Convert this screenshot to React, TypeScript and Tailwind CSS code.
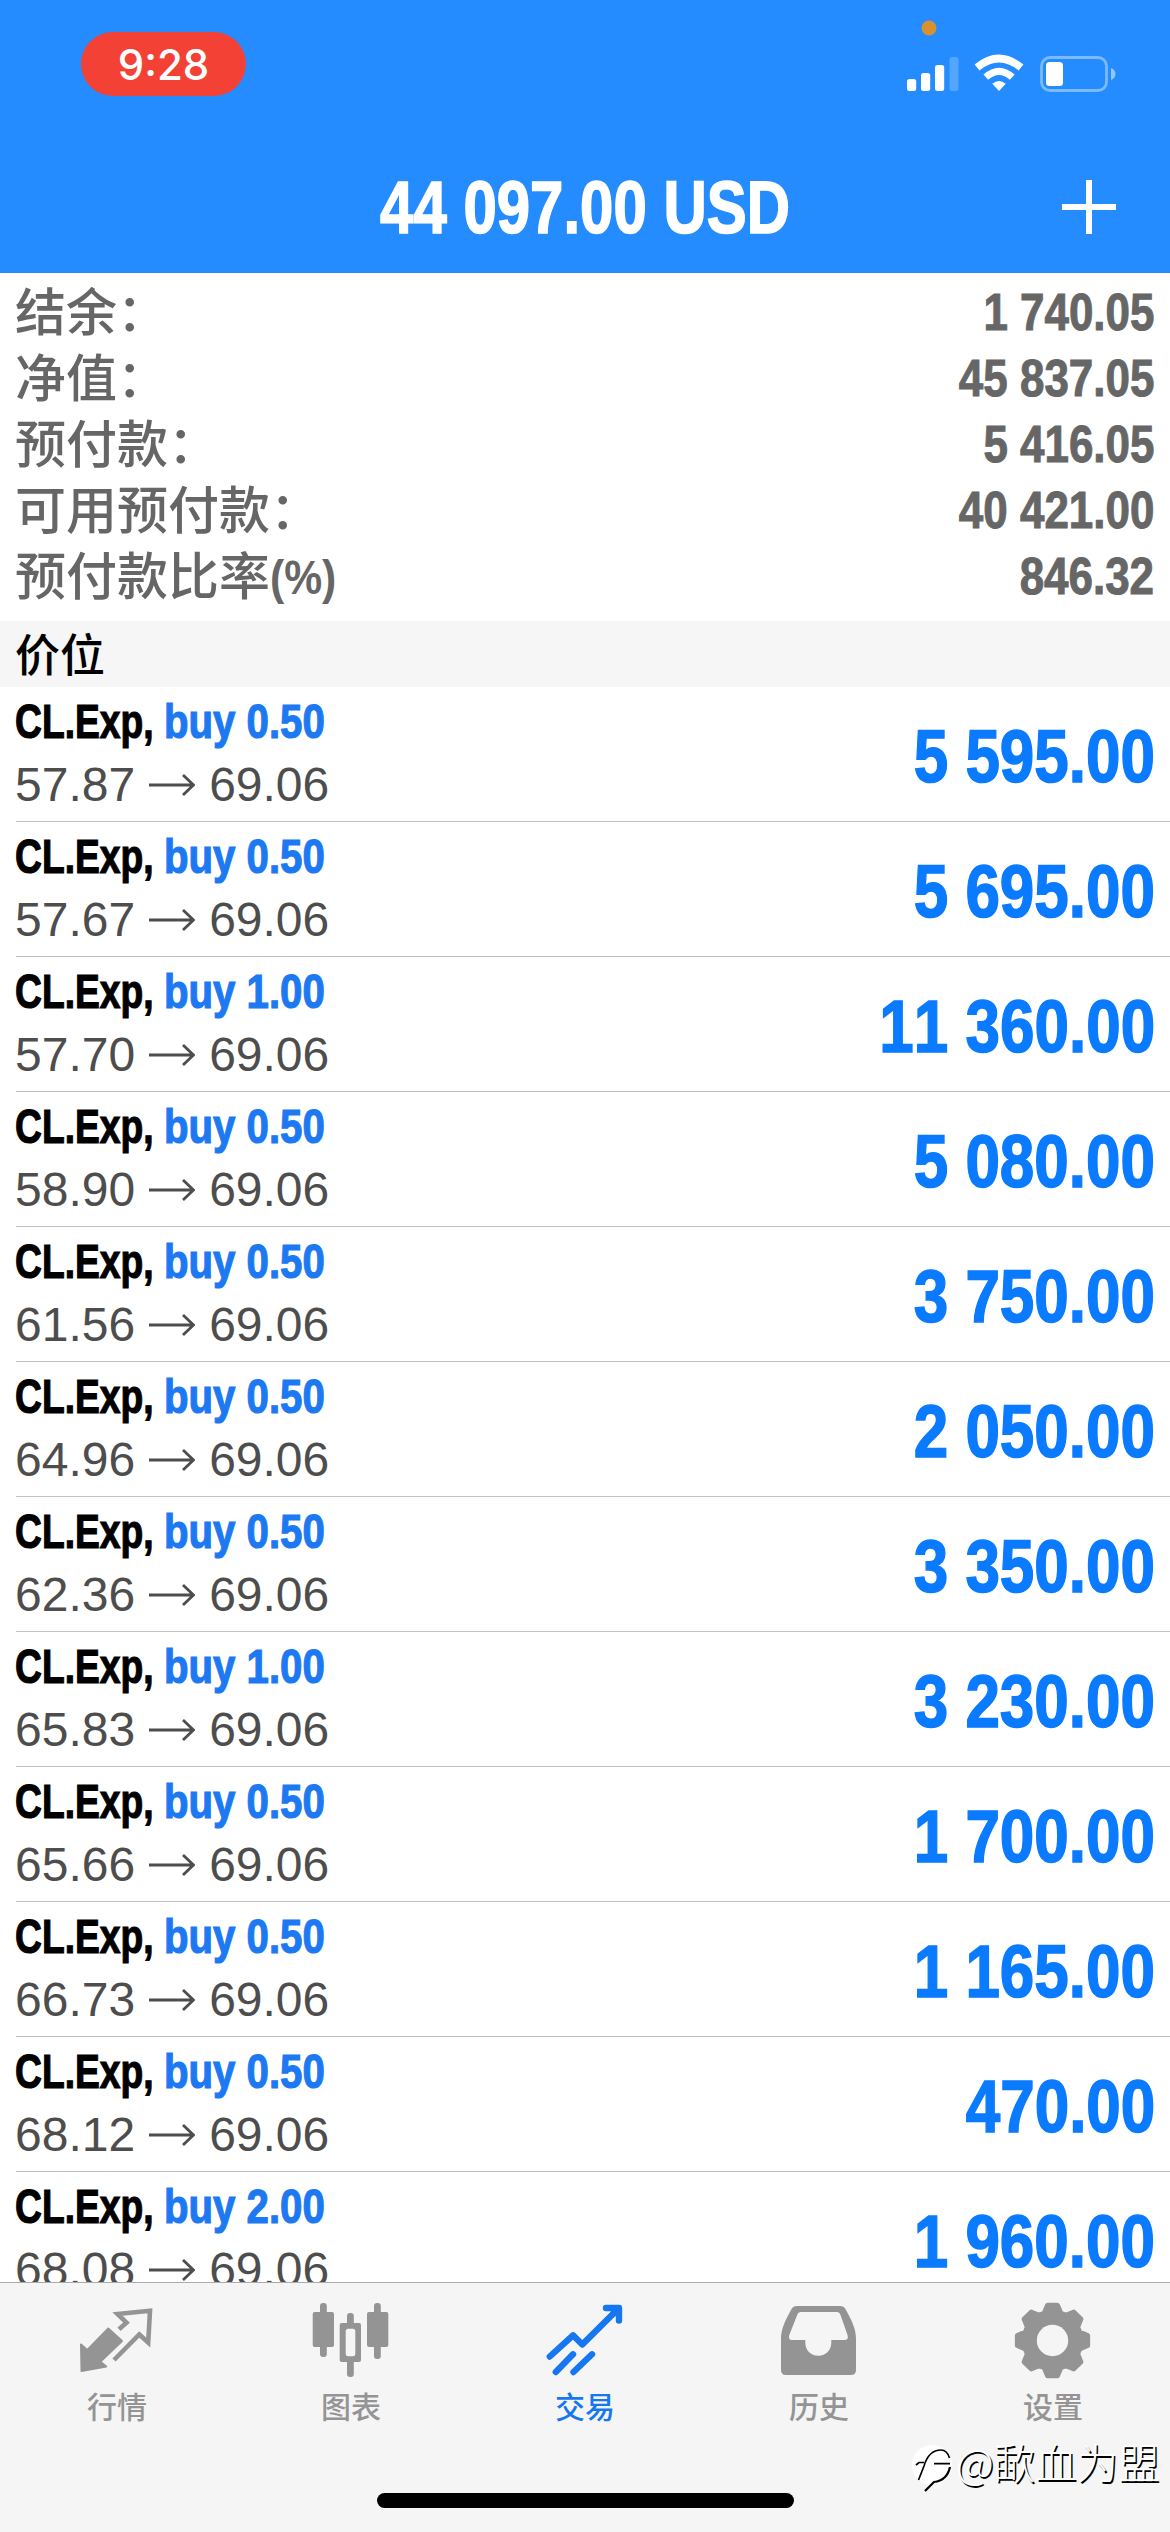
import type { ReactNode } from 'react';

type TabType = 'quotes' | 'charts' | 'trade' | 'history' | 'settings';

const summary = [
  { label: '结余：', value: '1 740.05' },
  { label: '净值：', value: '45 837.05' },
  { label: '预付款：', value: '5 416.05' },
  { label: '可用预付款：', value: '40 421.00' },
  { label: '预付款比率', suffix: '(%)', value: '846.32' },
];

const positions = [
  { volume: '0.50', open: '57.87', profit: '5 595.00' },
  { volume: '0.50', open: '57.67', profit: '5 695.00' },
  { volume: '1.00', open: '57.70', profit: '11 360.00' },
  { volume: '0.50', open: '58.90', profit: '5 080.00' },
  { volume: '0.50', open: '61.56', profit: '3 750.00' },
  { volume: '0.50', open: '64.96', profit: '2 050.00' },
  { volume: '0.50', open: '62.36', profit: '3 350.00' },
  { volume: '1.00', open: '65.83', profit: '3 230.00' },
  { volume: '0.50', open: '65.66', profit: '1 700.00' },
  { volume: '0.50', open: '66.73', profit: '1 165.00' },
  { volume: '0.50', open: '68.12', profit: '470.00' },
  { volume: '2.00', open: '68.08', profit: '1 960.00' },
];

function gearPath() {
  const c = 39.5;
  const points: string[] = [];
  for (let i = 0; i < 8; i++) {
    const base = i * 45;
    for (const [offset, r] of [[-17, 28.5], [-8, 35.5], [8, 35.5], [17, 28.5]]) {
      const a = ((base + offset) * Math.PI) / 180;
      points.push(`${(c + r * Math.sin(a)).toFixed(2)} ${(c - r * Math.cos(a)).toFixed(2)}`);
    }
  }
  return `M${points.join('L')}Z`;
}

function QuotesIcon() {
  return (
    <svg viewBox="0 0 80 80" className="size-20" strokeLinejoin="round">
      <path d="M4 43.5L10.3 49L31.3 27.5L45 40L23.3 60.7L29.3 65.5L4.5 70Z" fill="currentColor" stroke="currentColor" strokeWidth="2" />
      <path d="M42 28.2L49.5 21.7L40.5 13L73 9.8L71.2 41.5L62.3 33.5L37 59" fill="none" stroke="currentColor" strokeWidth="4.6" strokeLinejoin="miter" />
    </svg>
  );
}

function ChartsIcon() {
  return (
    <svg viewBox="0 0 80 80" className="size-20" fill="currentColor">
      <rect x="9" y="2" width="6.8" height="54" rx="3" />
      <rect x="1.7" y="11" width="21.3" height="35" rx="2" />
      <rect x="36" y="12" width="6.8" height="64" rx="3" />
      <rect x="28.7" y="22" width="21.3" height="39" rx="2" />
      <rect x="34.7" y="27.7" width="9.6" height="27.6" rx="2.5" fill="#f5f5f5" />
      <rect x="63" y="2" width="6.8" height="56" rx="3" />
      <rect x="56" y="11" width="21.3" height="35" rx="2" />
    </svg>
  );
}

function TradeIcon() {
  return (
    <svg viewBox="0 0 80 80" className="size-20" fill="none" stroke="currentColor" strokeWidth="6.4" strokeLinecap="round" strokeLinejoin="round">
      <path d="M4.8 55.5L28 34.3L37.3 43.5L73 8" />
      <path d="M61 7H74V19.5" />
      <path d="M67 8L73 14" strokeWidth="5" />
      <path d="M10.8 71L28 53.3M28.5 71L47 53.3" />
    </svg>
  );
}

function HistoryIcon() {
  return (
    <svg viewBox="0 0 80 80" className="size-20" fill="currentColor" fillRule="evenodd">
      <path d="M18 5H61C64 5 65.5 6 67 9C73 20 77 28 77 38V69Q77 74 72 74H7Q2 74 2 69V38C2 28 6 20 12 9C13.500 6 15 5 18 5ZM22 11C20 11 19 12 18.200 14L10.300 34Q9 39 13 39H26.300V41.500C26.300 49 31.500 54.700 39.300 54.700C47 54.700 52.300 49 52.300 41.500V39H65.500Q70 39 68.500 34L61.500 14C60.800 12 59.500 11 58 11Z" />
    </svg>
  );
}

function SettingsIcon() {
  return (
    <svg viewBox="0 0 80 80" className="size-20">
      <path d={gearPath()} fill="currentColor" stroke="currentColor" strokeWidth="5" strokeLinejoin="round" />
      <circle cx="39.500" cy="39.500" r="15.700" fill="#f5f5f5" />
    </svg>
  );
}

const tabs: { id: TabType; label: string; icon: () => ReactNode }[] = [
  { id: 'quotes', label: '行情', icon: QuotesIcon },
  { id: 'charts', label: '图表', icon: ChartsIcon },
  { id: 'trade', label: '交易', icon: TradeIcon },
  { id: 'history', label: '历史', icon: HistoryIcon },
  { id: 'settings', label: '设置', icon: SettingsIcon },
];

function StatusIcons() {
  return (
    <svg viewBox="0 0 220 80" className="h-[80px] w-[220px]" fill="#fff">
      <circle cx="29" cy="8" r="7.500" fill="#d8912f" />
      <rect x="7" y="59" width="9.200" height="12" rx="2.500" />
      <rect x="21" y="53" width="9.200" height="18" rx="2.500" />
      <rect x="35" y="45" width="9.200" height="26" rx="2.500" />
      <rect x="49.500" y="37" width="9" height="34" rx="2.500" opacity=".22" />
      <path d="M99 71L92.300 63.800Q99 58 105.700 63.800Z" />
      <path d="M85.800 57.200Q99 45.500 112.200 57.200" fill="none" stroke="#fff" strokeWidth="7" />
      <path d="M77 47.500Q99 29.500 121 47.500" fill="none" stroke="#fff" strokeWidth="7.600" />
      <rect x="141.500" y="37.500" width="65" height="33" rx="8.500" fill="none" stroke="#fff" strokeWidth="2.800" opacity=".4" />
      <rect x="146" y="42" width="17" height="24" rx="3.500" />
      <path d="M211 48C217 50 217 58 211 60Z" opacity=".5" />
    </svg>
  );
}

function Watermark() {
  return (
    <div className="absolute top-[2432px] left-[910px] flex h-[60px] items-center">
      <svg viewBox="0 0 46 60" className="h-[60px] w-[46px] shrink-0" fill="none" stroke="#000" strokeWidth="1.700">
        <circle cx="22" cy="33" r="20" fill="#fff" stroke="none" />
        <path d="M8.500 48L14 34C17 24 22 18 31 18C36 18 38 21 39.500 26" />
        <path d="M6 33L9 30.500H14M24 31.700H40" />
        <path d="M40 35C38 44 33 49 24 50L15 59" strokeWidth="2.200" />
      </svg>
      <span className="text-[41.500px] leading-none font-light whitespace-nowrap text-white [font-family:'Noto_Sans_CJK_SC',sans-serif] [text-shadow:1.500px_1.500px_0_#000]">
        @歃血为盟
      </span>
    </div>
  );
}

function App() {
  const activeTab: TabType = 'trade';

  return (
    <div className="relative flex h-[2532px] w-[1170px] flex-col overflow-hidden bg-white [font-family:'Liberation_Sans','Noto_Sans_CJK_SC',sans-serif] [font-kerning:none]">
      {/* Header */}
      <header className="flex h-[273px] shrink-0 flex-col bg-[#248cff] text-white">
        <div className="flex h-[140px] items-start justify-between pl-[81px]">
          <div className="mt-8 flex h-16 w-[165px] items-center justify-center rounded-full bg-[#f34235] text-[42px] font-medium [font-family:Inter,sans-serif]">
            9:28
          </div>
          <div className="mt-5 mr-[50px]">
            <StatusIcons />
          </div>
        </div>
        <div className="grid h-[133px] grid-cols-[1fr_auto_1fr] items-center">
          <div />
          <h1 className="mt-[3px] scale-x-[0.810] text-[74px] leading-none font-bold whitespace-nowrap [-webkit-text-stroke:1.600px_currentColor]">44 097.00 USD</h1>
          <svg viewBox="0 0 54 54" className="mr-[54px] size-[54px] justify-self-end" stroke="#fff" strokeWidth="6">
            <path d="M27 0V54M0 27H54" />
          </svg>
        </div>
      </header>

      {/* Account summary */}
      <section className="h-[348px] shrink-0 px-4 pt-1.5 text-[#666]">
        {summary.map((row) => (
          <div key={row.label} className="flex h-[66px] items-center justify-between">
            <div className="-mt-1.5 -ml-px flex text-[51px] leading-[66px] font-medium [font-family:'Noto_Sans_CJK_SC',sans-serif]">
              {row.label}
              {row.suffix && (
                <span className="origin-left translate-y-1 scale-x-[0.870] text-[49px] font-bold [font-family:'Liberation_Sans',sans-serif]">
                  {row.suffix}
                </span>
              )}
            </div>
            <div className="origin-right scale-x-[0.845] text-[52px] leading-[66px] font-bold [-webkit-text-stroke:1px_currentColor]">{row.value}</div>
          </div>
        ))}
      </section>

      <h2 className="flex h-[66px] shrink-0 items-center bg-[#f6f6f6] px-[15px] pb-1 text-[45px] leading-none font-medium text-black [font-family:'Noto_Sans_CJK_SC',sans-serif]">
        价位
      </h2>

      {/* Positions */}
      <main className="min-h-0 flex-1 overflow-hidden pl-4">
        {positions.map((item) => (
          <div key={item.open} className="flex h-[135px] justify-between border-b border-[#c2c2c4] pr-[15px]">
            <div className="-ml-px">
              <div className="flex h-[68px] text-[49px] leading-[68px] font-bold whitespace-nowrap [-webkit-text-stroke:1.200px_currentColor]">
                <span className="w-[149px] origin-left scale-x-[0.760] text-black">CL.Exp,</span>
                <span className="origin-left scale-x-[0.820] text-[#1c79f2]">buy {item.volume}</span>
              </div>
              <div className="flex h-[60px] items-center text-[48px] leading-[60px] text-[#4d4d4d]">
                {item.open}
                <svg viewBox="0 0 46 24" className="mr-[14px] ml-[14px] h-6 w-[46px]" fill="none" stroke="currentColor" strokeWidth="2.800">
                  <path d="M0 12H44M34 2L44.500 12L34 22" />
                </svg>
                69.06
              </div>
            </div>
            <div className="origin-right scale-x-[0.838] text-[74px] leading-[139px] font-bold text-[#0a7aff] [-webkit-text-stroke:1.500px_currentColor]">{item.profit}</div>
          </div>
        ))}
      </main>

      {/* Bottom navigation */}
      <nav className="flex h-[250px] shrink-0 flex-col items-center border-t border-[#acacac] bg-[#f5f5f5]">
        <div className="grid w-full grid-cols-5">
          {tabs.map((tab) => {
            const Icon = tab.icon;
            return (
              <button
                key={tab.id}
                className={`flex flex-col items-center pt-[18px] ${tab.id === activeTab ? 'text-[#1677f0]' : 'text-[#949494]'}`}
              >
                <Icon />
                <span className="mt-[3px] mb-[3px] text-[30px] leading-[42px] font-medium [font-family:'Noto_Sans_CJK_SC',sans-serif]">{tab.label}</span>
              </button>
            );
          })}
        </div>
        <div className="mt-[64px] h-[15px] w-[417px] rounded-full bg-black" />
      </nav>

      <Watermark />
    </div>
  );
}

export default App;
